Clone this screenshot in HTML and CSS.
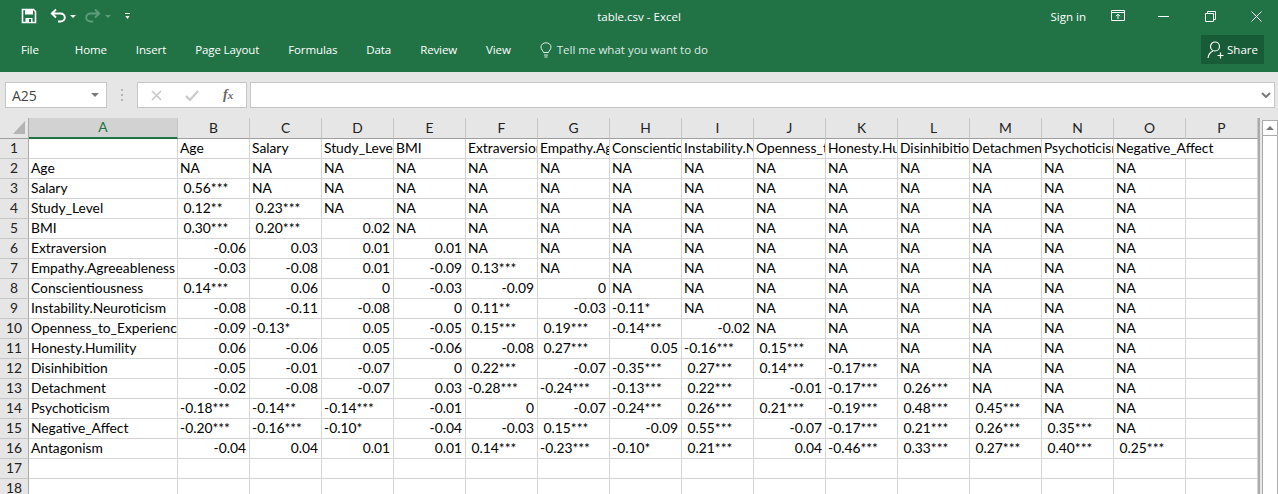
FILE: index.html
```html
<!DOCTYPE html>
<html>
<head>
  <meta charset="utf-8"/>
  <title>table.csv - Excel</title>
  <link rel="stylesheet" href="styles.css">
</head>
<body>
  <header class="ribbon">
    <div class="titlebar">
      <div class="quick">
        <svg class="ico-save" width="16" height="16" viewBox="0 0 16 16"><path d="M1.5 1.5H12.5L14.5 3.5V14.5H1.5Z" fill="none" stroke="#fff" stroke-width="1.6"/><rect x="4" y="1.5" width="8" height="5" fill="#fff"/><rect x="4.5" y="10" width="7" height="4.5" fill="#fff"/><rect x="8" y="11" width="2" height="3" fill="#217346"/></svg>
        <svg class="ico-undo" width="17" height="16" viewBox="0 0 17 16"><path d="M6 1.5L1.8 5.5L6 9.5M2 5.5H10.5C13 5.5 14.8 7.2 14.8 9.5S13 13.5 10.5 13.5H8" fill="none" stroke="#fff" stroke-width="1.9"/></svg>
        <span class="caret"></span>
        <svg class="ico-redo" width="17" height="16" viewBox="0 0 17 16"><path d="M11 1.5L15.2 5.5L11 9.5M15 5.5H6.5C4 5.5 2.2 7.2 2.2 9.5S4 13.5 6.5 13.5H9" fill="none" stroke="#5f9c7b" stroke-width="1.9"/></svg>
        <span class="caret dim"></span>
        <span class="customize"></span>
      </div>
      <div class="doc-title">table.csv - Excel</div>
      <div class="winbar">
        <span class="signin">Sign in</span>
        <svg class="ico-box" width="14" height="12" viewBox="0 0 14 12"><path d="M.5 .5H13.5V10.5H.5ZM.5 2.5H13.5M7 9V4.5M5 6.2L7 4.2L9 6.2" fill="none" stroke="#fff"/></svg>
        <svg class="ico-min" width="11" height="11" viewBox="0 0 11 11"><path d="M0 5.5H11" stroke="#fff"/></svg>
        <svg class="ico-restore" width="11" height="11" viewBox="0 0 11 11"><path d="M.5 2.5H8.5V10.5H.5ZM2.5 2.5V.5H10.5V8.5H8.5" fill="none" stroke="#fff"/></svg>
        <svg class="ico-close" width="11" height="11" viewBox="0 0 11 11"><path d="M.5 .5L10.5 10.5M10.5 .5L.5 10.5" stroke="#fff"/></svg>
      </div>
    </div>
    <nav class="tabs">
      <span class="tab file">File</span>
      <span class="tab">Home</span>
      <span class="tab">Insert</span>
      <span class="tab">Page Layout</span>
      <span class="tab">Formulas</span>
      <span class="tab">Data</span>
      <span class="tab">Review</span>
      <span class="tab">View</span>
      <span class="tell">
        <svg width="12" height="16" viewBox="0 0 12 16"><path d="M3.5 10.5C3.2 8.5 1 7.8 1 5C1 2.600 3.200 .8 6 .8S11 2.600 11 5C11 7.800 8.800 8.500 8.500 10.500ZM4 13H8M4.500 15H7.500" fill="none" stroke="#dfeae4"/></svg>
        Tell me what you want to do
      </span>
      <span class="share">
        <svg width="18" height="18" viewBox="0 0 18 18"><circle cx="8" cy="5.500" r="4.500" fill="none" stroke="#fff" stroke-width="1.200"/><path d="M1 17C1.500 13 3.500 11 6 10M13.500 11.500V17.500M10.500 14.500H16.500" fill="none" stroke="#fff" stroke-width="1.200"/></svg>
        Share
      </span>
    </nav>
  </header>

  <section class="formula-bar">
    <div class="namebox"><span>A25</span><i class="down"></i></div>
    <div class="grip"></div>
    <div class="fx-box">
      <svg width="13" height="13" viewBox="0 0 13 13"><path d="M2 2L11 11M11 2L2 11" stroke="#c8c8c8" stroke-width="1.600"/></svg>
      <svg class="ico-check" width="14" height="13" viewBox="0 0 14 13"><path d="M1 7L5 11L13 2" fill="none" stroke="#c8c8c8" stroke-width="2"/></svg>
      <span class="fx">f<small>x</small></span>
    </div>
    <div class="formula-input">
      <svg width="10" height="6" viewBox="0 0 10 6"><path d="M1 1L5 5L9 1" fill="none" stroke="#7a7a7a" stroke-width="2"/></svg>
    </div>
  </section>

  <main class="workarea">
    <table class="sheet">
      <colgroup>
        <col class="c-head"><col class="c-a">
        <col class="c"><col class="c"><col class="c"><col class="c"><col class="c"><col class="c"><col class="c"><col class="c"><col class="c"><col class="c"><col class="c"><col class="c"><col class="c"><col class="c"><col class="c">
      </colgroup>
      <thead>
        <tr><th class="corner"><span class="tri"></span></th><th class="active">A</th><th>B</th><th>C</th><th>D</th><th>E</th><th>F</th><th>G</th><th>H</th><th>I</th><th>J</th><th>K</th><th>L</th><th>M</th><th>N</th><th>O</th><th>P</th></tr>
      </thead>
      <tbody>
        <tr><th>1</th><td></td><td>Age</td><td>Salary</td><td>Study_Level</td><td>BMI</td><td>Extraversion</td><td>Empathy.Agreeableness</td><td>Conscientiousness</td><td>Instability.Neuroticism</td><td>Openness_to_Experience</td><td>Honesty.Humility</td><td>Disinhibition</td><td>Detachment</td><td>Psychoticism</td><td colspan="2">Negative_Affect</td></tr>
        <tr><th>2</th><td>Age</td><td>NA</td><td>NA</td><td>NA</td><td>NA</td><td>NA</td><td>NA</td><td>NA</td><td>NA</td><td>NA</td><td>NA</td><td>NA</td><td>NA</td><td>NA</td><td>NA</td><td></td></tr>
        <tr><th>3</th><td>Salary</td><td> 0.56***</td><td>NA</td><td>NA</td><td>NA</td><td>NA</td><td>NA</td><td>NA</td><td>NA</td><td>NA</td><td>NA</td><td>NA</td><td>NA</td><td>NA</td><td>NA</td><td></td></tr>
        <tr><th>4</th><td>Study_Level</td><td> 0.12**</td><td> 0.23***</td><td>NA</td><td>NA</td><td>NA</td><td>NA</td><td>NA</td><td>NA</td><td>NA</td><td>NA</td><td>NA</td><td>NA</td><td>NA</td><td>NA</td><td></td></tr>
        <tr><th>5</th><td>BMI</td><td> 0.30***</td><td> 0.20***</td><td class="n">0.02</td><td>NA</td><td>NA</td><td>NA</td><td>NA</td><td>NA</td><td>NA</td><td>NA</td><td>NA</td><td>NA</td><td>NA</td><td>NA</td><td></td></tr>
        <tr><th>6</th><td>Extraversion</td><td class="n">-0.06</td><td class="n">0.03</td><td class="n">0.01</td><td class="n">0.01</td><td>NA</td><td>NA</td><td>NA</td><td>NA</td><td>NA</td><td>NA</td><td>NA</td><td>NA</td><td>NA</td><td>NA</td><td></td></tr>
        <tr><th>7</th><td>Empathy.Agreeableness</td><td class="n">-0.03</td><td class="n">-0.08</td><td class="n">0.01</td><td class="n">-0.09</td><td> 0.13***</td><td>NA</td><td>NA</td><td>NA</td><td>NA</td><td>NA</td><td>NA</td><td>NA</td><td>NA</td><td>NA</td><td></td></tr>
        <tr><th>8</th><td>Conscientiousness</td><td> 0.14***</td><td class="n">0.06</td><td class="n">0</td><td class="n">-0.03</td><td class="n">-0.09</td><td class="n">0</td><td>NA</td><td>NA</td><td>NA</td><td>NA</td><td>NA</td><td>NA</td><td>NA</td><td>NA</td><td></td></tr>
        <tr><th>9</th><td>Instability.Neuroticism</td><td class="n">-0.08</td><td class="n">-0.11</td><td class="n">-0.08</td><td class="n">0</td><td> 0.11**</td><td class="n">-0.03</td><td>-0.11*</td><td>NA</td><td>NA</td><td>NA</td><td>NA</td><td>NA</td><td>NA</td><td>NA</td><td></td></tr>
        <tr><th>10</th><td>Openness_to_Experience</td><td class="n">-0.09</td><td>-0.13*</td><td class="n">0.05</td><td class="n">-0.05</td><td> 0.15***</td><td> 0.19***</td><td>-0.14***</td><td class="n">-0.02</td><td>NA</td><td>NA</td><td>NA</td><td>NA</td><td>NA</td><td>NA</td><td></td></tr>
        <tr><th>11</th><td>Honesty.Humility</td><td class="n">0.06</td><td class="n">-0.06</td><td class="n">0.05</td><td class="n">-0.06</td><td class="n">-0.08</td><td> 0.27***</td><td class="n">0.05</td><td>-0.16***</td><td> 0.15***</td><td>NA</td><td>NA</td><td>NA</td><td>NA</td><td>NA</td><td></td></tr>
        <tr><th>12</th><td>Disinhibition</td><td class="n">-0.05</td><td class="n">-0.01</td><td class="n">-0.07</td><td class="n">0</td><td> 0.22***</td><td class="n">-0.07</td><td>-0.35***</td><td> 0.27***</td><td> 0.14***</td><td>-0.17***</td><td>NA</td><td>NA</td><td>NA</td><td>NA</td><td></td></tr>
        <tr><th>13</th><td>Detachment</td><td class="n">-0.02</td><td class="n">-0.08</td><td class="n">-0.07</td><td class="n">0.03</td><td>-0.28***</td><td>-0.24***</td><td>-0.13***</td><td> 0.22***</td><td class="n">-0.01</td><td>-0.17***</td><td> 0.26***</td><td>NA</td><td>NA</td><td>NA</td><td></td></tr>
        <tr><th>14</th><td>Psychoticism</td><td>-0.18***</td><td>-0.14**</td><td>-0.14***</td><td class="n">-0.01</td><td class="n">0</td><td class="n">-0.07</td><td>-0.24***</td><td> 0.26***</td><td> 0.21***</td><td>-0.19***</td><td> 0.48***</td><td> 0.45***</td><td>NA</td><td>NA</td><td></td></tr>
        <tr><th>15</th><td>Negative_Affect</td><td>-0.20***</td><td>-0.16***</td><td>-0.10*</td><td class="n">-0.04</td><td class="n">-0.03</td><td> 0.15***</td><td class="n">-0.09</td><td> 0.55***</td><td class="n">-0.07</td><td>-0.17***</td><td> 0.21***</td><td> 0.26***</td><td> 0.35***</td><td>NA</td><td></td></tr>
        <tr><th>16</th><td>Antagonism</td><td class="n">-0.04</td><td class="n">0.04</td><td class="n">0.01</td><td class="n">0.01</td><td> 0.14***</td><td>-0.23***</td><td>-0.10*</td><td> 0.21***</td><td class="n">0.04</td><td>-0.46***</td><td> 0.33***</td><td> 0.27***</td><td> 0.40***</td><td> 0.25***</td><td></td></tr>
        <tr><th>17</th><td></td><td></td><td></td><td></td><td></td><td></td><td></td><td></td><td></td><td></td><td></td><td></td><td></td><td></td><td></td><td></td></tr>
        <tr><th>18</th><td></td><td></td><td></td><td></td><td></td><td></td><td></td><td></td><td></td><td></td><td></td><td></td><td></td><td></td><td></td><td></td></tr>
      </tbody>
    </table>
    <div class="scrollbar">
      <div class="scroll-up"><i></i></div>
    </div>
  </main>
</body>
</html>
```

FILE: styles.css
```css
html, body {
  margin: 0;
  height: 494px;
  overflow: hidden;
}
body {
  display: flex;
  flex-direction: column;
  background: #e6e6e6;
  font-family: "Open Sans", sans-serif;
  font-size: 11.5px;
}

/* green ribbon */
.ribbon {
  height: 72px;
  background: #217346;
  color: #fff;
}
.titlebar {
  display: grid;
  grid-template-columns: 1fr auto 1fr;
  align-items: center;
  height: 32px;
}
.quick {
  display: flex;
  align-items: center;
  padding-left: 21px;
}
.ico-undo { margin-left: 13px; }
.ico-redo { margin-left: 8px; }
.caret {
  width: 0;
  height: 0;
  margin-left: 3px;
  border-left: 3px solid transparent;
  border-right: 3px solid transparent;
  border-top: 3px solid #fff;
}
.caret.dim { border-top-color: #5f9c7b; margin-left: 4px; }
.customize {
  width: 5px;
  height: 5px;
  margin-left: 14px;
  border-top: 1px solid #fff;
  background: linear-gradient(#fff, #fff) no-repeat 0 2px / 5px 3px;
  clip-path: polygon(0 0, 100% 0, 100% 40%, 50% 100%, 0 40%);
}
.doc-title { font-size: 11.5px; }
.winbar {
  display: flex;
  align-items: center;
  justify-content: flex-end;
}
.signin { margin-right: 25px; }
.ico-min { margin-left: 33px; }
.ico-restore { margin-left: 36px; }
.ico-close { margin-left: 35px; margin-right: 16px; }

.tabs {
  display: flex;
  align-items: center;
  gap: 29px;
  height: 35px;
  padding-left: 21px;
}
.tab { letter-spacing: -.11px; }
.tab.file { margin-right: 7px; }
.tell {
  display: flex;
  align-items: center;
  gap: 5px;
  color: #dfeae4;
}
.share {
  display: flex;
  align-items: center;
  justify-content: center;
  gap: 2px;
  width: 63px;
  height: 29px;
  margin-left: auto;
  margin-right: 14px;
  background: #185c37;
}

/* name box + formula input */
.formula-bar {
  display: flex;
  align-items: flex-start;
  height: 46px;
  padding-top: 10px;
  box-sizing: border-box;
}
.namebox, .fx-box, .formula-input {
  height: 26px;
  box-sizing: border-box;
  background: #fff;
  border: 1px solid #c6c6c6;
  display: flex;
  align-items: center;
}
.namebox {
  width: 102px;
  margin-left: 5px;
  padding: 0 6px;
  justify-content: space-between;
  color: #444;
  font-size: 14px;
}
.down {
  width: 0;
  height: 0;
  border-left: 4px solid transparent;
  border-right: 4px solid transparent;
  border-top: 4px solid #7a7a7a;
  margin-right: 1px;
}
.grip {
  width: 2px;
  height: 12px;
  margin: 7px 14px 0 14px;
  background: repeating-linear-gradient(#b4b4b4 0 2px, transparent 2px 5px);
}
.fx-box {
  width: 110px;
  padding-left: 12px;
  gap: 24px;
}
.ico-check { margin-left: -2px; }
.fx {
  font-family: "Liberation Serif", serif;
  font-style: italic;
  font-size: 14px;
  font-weight: bold;
  color: #666;
}
.fx small { font-size: 11px; }
.formula-input {
  width: 1025px;
  margin-left: 3px;
  justify-content: flex-end;
  padding-right: 3px;
}

/* sheet */
.workarea {
  display: flex;
  flex: 1;
  min-height: 0;
}
.sheet {
  table-layout: fixed;
  width: 1260px;
  height: 360px;
  flex: none;
  border-collapse: separate;
  border-spacing: 0;
  border-right: 2px solid #ababab;
  background: #fff;
  font-family: Lato, sans-serif;
  font-size: 13.8px;
  color: #000;
}
.c-head { width: 29px; }
.c-a { width: 149px; }
.c { width: 72px; }
.sheet th, .sheet td {
  height: 20px;
  box-sizing: border-box;
  padding: 0 0 2px;
  font-weight: normal;
  line-height: 17px;
  overflow: hidden;
  white-space: pre;
}
.sheet th {
  background: #e6e6e6;
  text-align: center;
  color: #222;
  border-right: 1px solid #ababab;
  border-bottom: 1px solid #c6c6c6;
}
.sheet thead th {
  border-right-color: #c6c6c6;
  border-bottom: 1px solid #9f9f9f;
}
.sheet thead th.corner { position: relative; border-right-color: #ababab; }
.tri {
  position: absolute;
  left: 13px;
  top: 3px;
  width: 12px;
  height: 13px;
  background: #b4b4b4;
  clip-path: polygon(100% 0, 100% 100%, 0 100%);
}
.sheet thead th.active {
  background: #d2d2d2;
  color: #217346;
  border-bottom: 2px solid #217346;
}
.sheet td {
  padding: 0 3px 2px 2px;
  border-right: 1px solid #d4d4d4;
  border-bottom: 1px solid #d4d4d4;
}
.sheet td.n { text-align: right; }

.scrollbar {
  width: 16px;
  margin: 2px 0 0 2px;
  box-sizing: border-box;
  background: #fff;
  border-left: 1px solid #ababab;
  border-right: 1px solid #ababab;
  border-top: 1px solid #ababab;
}
.scroll-up {
  display: flex;
  align-items: center;
  justify-content: center;
  height: 14px;
  border-bottom: 1px solid #ababab;
}
.scroll-up i {
  width: 0;
  height: 0;
  border-left: 4px solid transparent;
  border-right: 4px solid transparent;
  border-bottom: 4px solid #7a7a7a;
}
```
